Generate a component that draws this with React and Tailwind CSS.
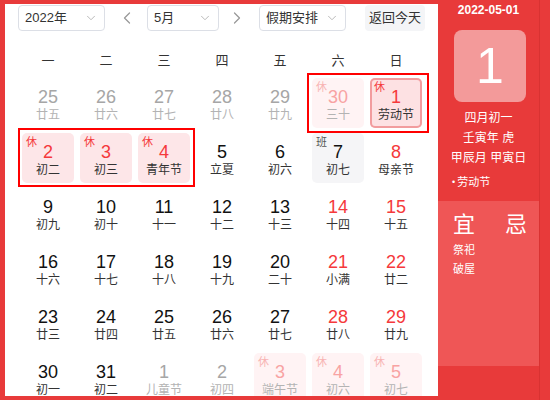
import { ChevronDown, ChevronLeft, ChevronRight } from "lucide-react";

const font = { fontFamily: '"Liberation Sans", "Noto Sans CJK SC", sans-serif' };

const weeks = ["一", "二", "三", "四", "五", "六", "日"];

const rows = [
  [
    { d: 25, l: "廿五", o: 1 },
    { d: 26, l: "廿六", o: 1 },
    { d: 27, l: "廿七", o: 1 },
    { d: 28, l: "廿八", o: 1 },
    { d: 29, l: "廿九", o: 1 },
    { d: 30, l: "三十", o: 1, r: 1 },
    { d: 1, l: "劳动节", r: 1, s: 1 },
  ],
  [
    { d: 2, l: "初二", r: 1 },
    { d: 3, l: "初三", r: 1 },
    { d: 4, l: "青年节", r: 1 },
    { d: 5, l: "立夏" },
    { d: 6, l: "初六" },
    { d: 7, l: "初七", w: 1 },
    { d: 8, l: "母亲节", red: 1 },
  ],
  [
    { d: 9, l: "初九" },
    { d: 10, l: "初十" },
    { d: 11, l: "十一" },
    { d: 12, l: "十二" },
    { d: 13, l: "十三" },
    { d: 14, l: "十四", red: 1 },
    { d: 15, l: "十五", red: 1 },
  ],
  [
    { d: 16, l: "十六" },
    { d: 17, l: "十七" },
    { d: 18, l: "十八" },
    { d: 19, l: "十九" },
    { d: 20, l: "二十" },
    { d: 21, l: "小满", red: 1 },
    { d: 22, l: "廿二", red: 1 },
  ],
  [
    { d: 23, l: "廿三" },
    { d: 24, l: "廿四" },
    { d: 25, l: "廿五" },
    { d: 26, l: "廿六" },
    { d: 27, l: "廿七" },
    { d: 28, l: "廿八", red: 1 },
    { d: 29, l: "廿九", red: 1 },
  ],
  [
    { d: 30, l: "初一" },
    { d: 31, l: "初二" },
    { d: 1, l: "儿童节", o: 1 },
    { d: 2, l: "初四", o: 1 },
    { d: 3, l: "端午节", o: 1, r: 1 },
    { d: 4, l: "初六", o: 1, r: 1 },
    { d: 5, l: "初七", o: 1, r: 1 },
  ],
];

function Select({ label, w }) {
  return (
    <div
      className={`h-[26px] ${w} border border-[#dcdfe6] rounded-[4px] flex items-center justify-between pl-[6px] pr-[6px] text-[13px] text-[#333]`}
    >
      <span>{label}</span>
      <ChevronDown size={14} strokeWidth={1.5} className="text-[#b0b0b0]" />
    </div>
  );
}

function Cell({ c }) {
  let bg = "";
  if (c.s) bg = "bg-[#fde1e3] shadow-[inset_0_0_0_2px_#f29c9e]";
  else if (c.r && c.o) bg = "bg-[#fff3f4]";
  else if (c.r) bg = "bg-[#fde6e8]";
  else if (c.w) bg = "bg-[#f5f5f7]";

  let num = "text-[#111]";
  if (c.o && c.r) num = "text-[#f8a3a3]";
  else if (c.o) num = "text-[#a6a6a6]";
  else if (c.r || c.red) num = "text-[#f5393b]";

  const lunar = c.o ? "text-[#b3b3b3]" : "text-[#333]";

  return (
    <div className={`relative h-[50px] rounded-[5px] flex flex-col items-center pt-[9px] ${bg}`}>
      {c.r ? (
        <span
          className={`absolute left-[4px] top-[4px] text-[11px] leading-none ${
            c.o ? "text-[#f8b3b3]" : "text-[#f5393b]"
          }`}
        >
          休
        </span>
      ) : null}
      {c.w ? (
        <span className="absolute left-[4px] top-[4px] text-[11px] leading-none text-[#555]">
          班
        </span>
      ) : null}
      <span className={`text-[18px] leading-[20px] ${num}`}>{c.d}</span>
      <span className={`text-[12px] leading-[16px] ${lunar}`}>{c.l}</span>
    </div>
  );
}

export default function App() {
  return (
    <div className="w-[550px] h-[400px] bg-[#e83a3a] flex overflow-hidden" style={font}>
      <div className="ml-[5px] mt-[4px] w-[433px] h-[392px] bg-white relative overflow-hidden">
        <div className="flex items-center pt-[1px] pl-[13px]">
          <Select label="2022年" w="w-[87px]" />
          <ChevronLeft size={20} strokeWidth={1.5} className="ml-[12px] text-[#999]" />
          <div className="ml-[10px]">
            <Select label="5月" w="w-[72px]" />
          </div>
          <ChevronRight size={20} strokeWidth={1.5} className="ml-[8px] text-[#999]" />
          <div className="ml-[12px]">
            <Select label="假期安排" w="w-[87px]" />
          </div>
          <div className="ml-[19px] h-[26px] w-[60px] rounded-[4px] bg-[#f4f5f7] flex items-center justify-center text-[13px] text-[#333]">
            返回今天
          </div>
        </div>

        <div className="mt-[15px] ml-[17px] h-[30px] grid grid-cols-[repeat(7,52px)] gap-x-[6px] items-center">
          {weeks.map((w) => (
            <div key={w} className="text-center text-[13px] text-[#333]">
              {w}
            </div>
          ))}
        </div>

        <div className="mt-[2px] ml-[17px] grid grid-cols-[repeat(7,52px)] gap-x-[6px] gap-y-[5px]">
          {rows.flat().map((c, i) => (
            <Cell key={i} c={c} />
          ))}
        </div>

        <div className="absolute left-[302px] top-[69px] w-[122px] h-[60px] border-2 border-[#ff0000]" />
        <div className="absolute left-[13px] top-[124px] w-[177px] h-[59px] border-2 border-[#ff0000]" />
      </div>

      <div className="w-[102px] h-full border-r border-[#d93232] flex flex-col text-white">
        <div className="mt-[2px] h-[16px] text-center text-[12px] font-bold leading-[16px]">
          2022-05-01
        </div>
        <div className="mt-[12px] ml-[16px] w-[72px] h-[72px] rounded-[8px] bg-[#f39a9a] flex items-center justify-center text-[50px] leading-none">
          1
        </div>
        <div className="mt-[6px] flex flex-col items-center text-[12px] leading-[20px]">
          <span>四月初一</span>
          <span>壬寅年 虎</span>
          <span>甲辰月 甲寅日</span>
        </div>
        <div className="mt-[6px] pl-[14px] flex items-center text-[11px] leading-[16px]">
          <span className="text-[9px] mr-[2px]">•</span>
          <span>劳动节</span>
        </div>
        <div className="mt-[11px] h-[165px] bg-[#ef5656] flex pl-[15px] pt-[12px]">
          <div className="w-[52px] flex flex-col">
            <span className="text-[22px] leading-[24px]">宜</span>
            <span className="mt-[4px] text-[11px] leading-[19px]">祭祀</span>
            <span className="text-[11px] leading-[19px]">破屋</span>
          </div>
          <div className="flex flex-col">
            <span className="text-[22px] leading-[24px]">忌</span>
          </div>
        </div>
      </div>
      <div className="flex-1" />
    </div>
  );
}
